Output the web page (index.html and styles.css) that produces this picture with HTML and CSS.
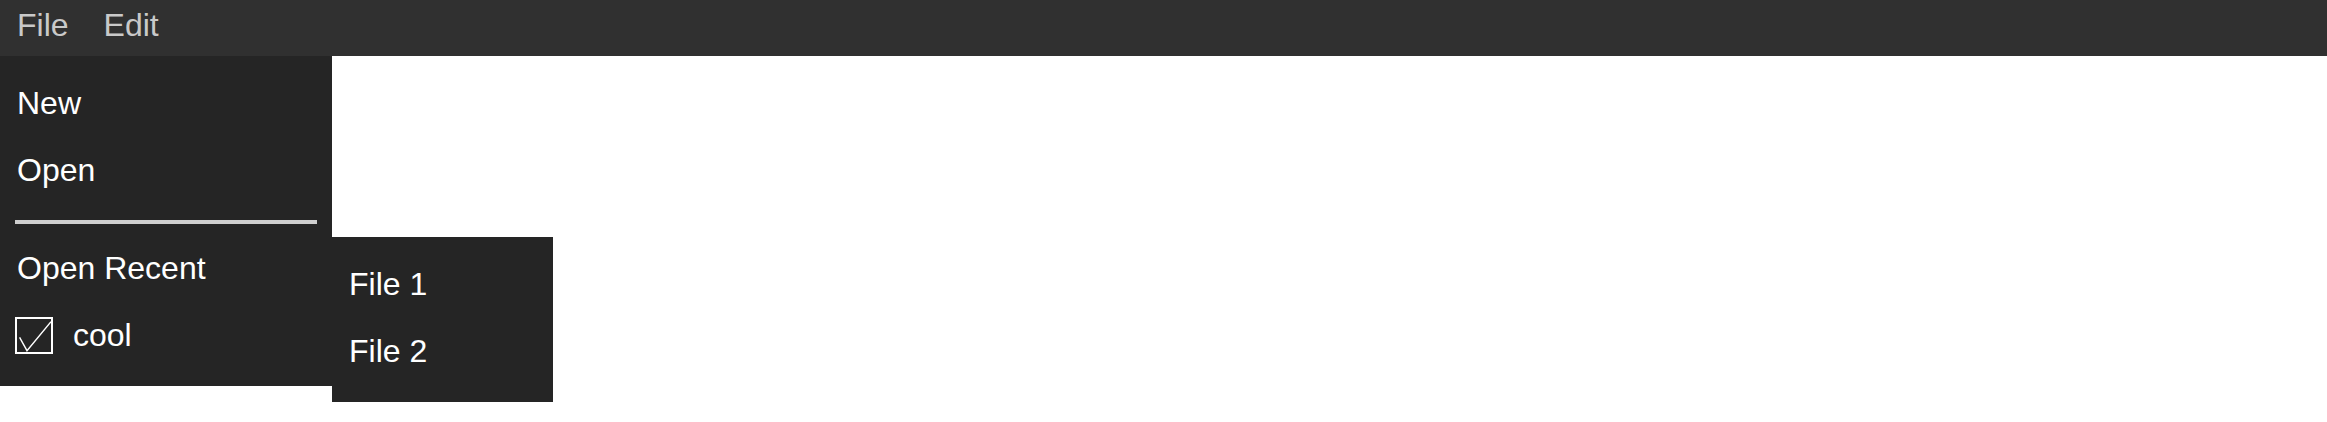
FILE: index.html
```html
<!DOCTYPE html>
<html lang="en">
<head>
<meta charset="utf-8">
<title>Menu</title>
<link rel="stylesheet" href="styles.css">
</head>
<body>
<div class="app">
  <nav class="menubar">
    <span class="menubar-item">File</span>
    <span class="menubar-item">Edit</span>
  </nav>
  <div class="menu">
    <div class="menu-item">New</div>
    <div class="menu-item">Open</div>
    <div class="menu-separator"></div>
    <div class="menu-item has-sub">Open Recent
      <div class="menu submenu">
        <div class="menu-item">File 1</div>
        <div class="menu-item">File 2</div>
      </div>
    </div>
    <div class="menu-item check-item">
      <span class="checkbox">
        <svg width="34" height="33" viewBox="0 0 34 33"><polyline points="2.6,18.3 10,31.7 34,2.7" fill="none" stroke="#fff" stroke-width="1.4"/></svg>
      </span>
      <span>cool</span>
    </div>
  </div>
</div>
</body>
</html>
```
FILE: styles.css
```css
* { box-sizing: border-box; }
html, body {
  margin: 0;
  padding: 0;
  background: #ffffff;
  font-family: "Liberation Sans", Arial, sans-serif;
}
.app {
  position: relative;
  width: 2327px;
  height: 422px;
}
.menubar {
  display: flex;
  gap: 35px;
  height: 56px;
  padding: 7px 0 0 17px;
  background: #303030;
}
.menubar-item {
  font-size: 32px;
  line-height: 37px;
  color: #c9c9c9;
}
.menu {
  position: absolute;
  left: 0;
  top: 56px;
  width: 332px;
  padding: 14px 0 17px;
  background: #252525;
}
.menu-item {
  position: relative;
  padding: 15px 17px;
  font-size: 32px;
  line-height: 37px;
  color: #ffffff;
}
.menu-separator {
  height: 4px;
  margin: 16px 15px 11px;
  background: #cfcfcf;
}
.submenu {
  left: 100%;
  top: 2px;
  width: 221px;
}
.check-item {
  display: flex;
  align-items: center;
  gap: 20px;
  padding-left: 15px;
}
.checkbox {
  display: block;
  width: 38px;
  height: 37px;
  border: 2px solid #ffffff;
}
.checkbox svg {
  display: block;
}
```
